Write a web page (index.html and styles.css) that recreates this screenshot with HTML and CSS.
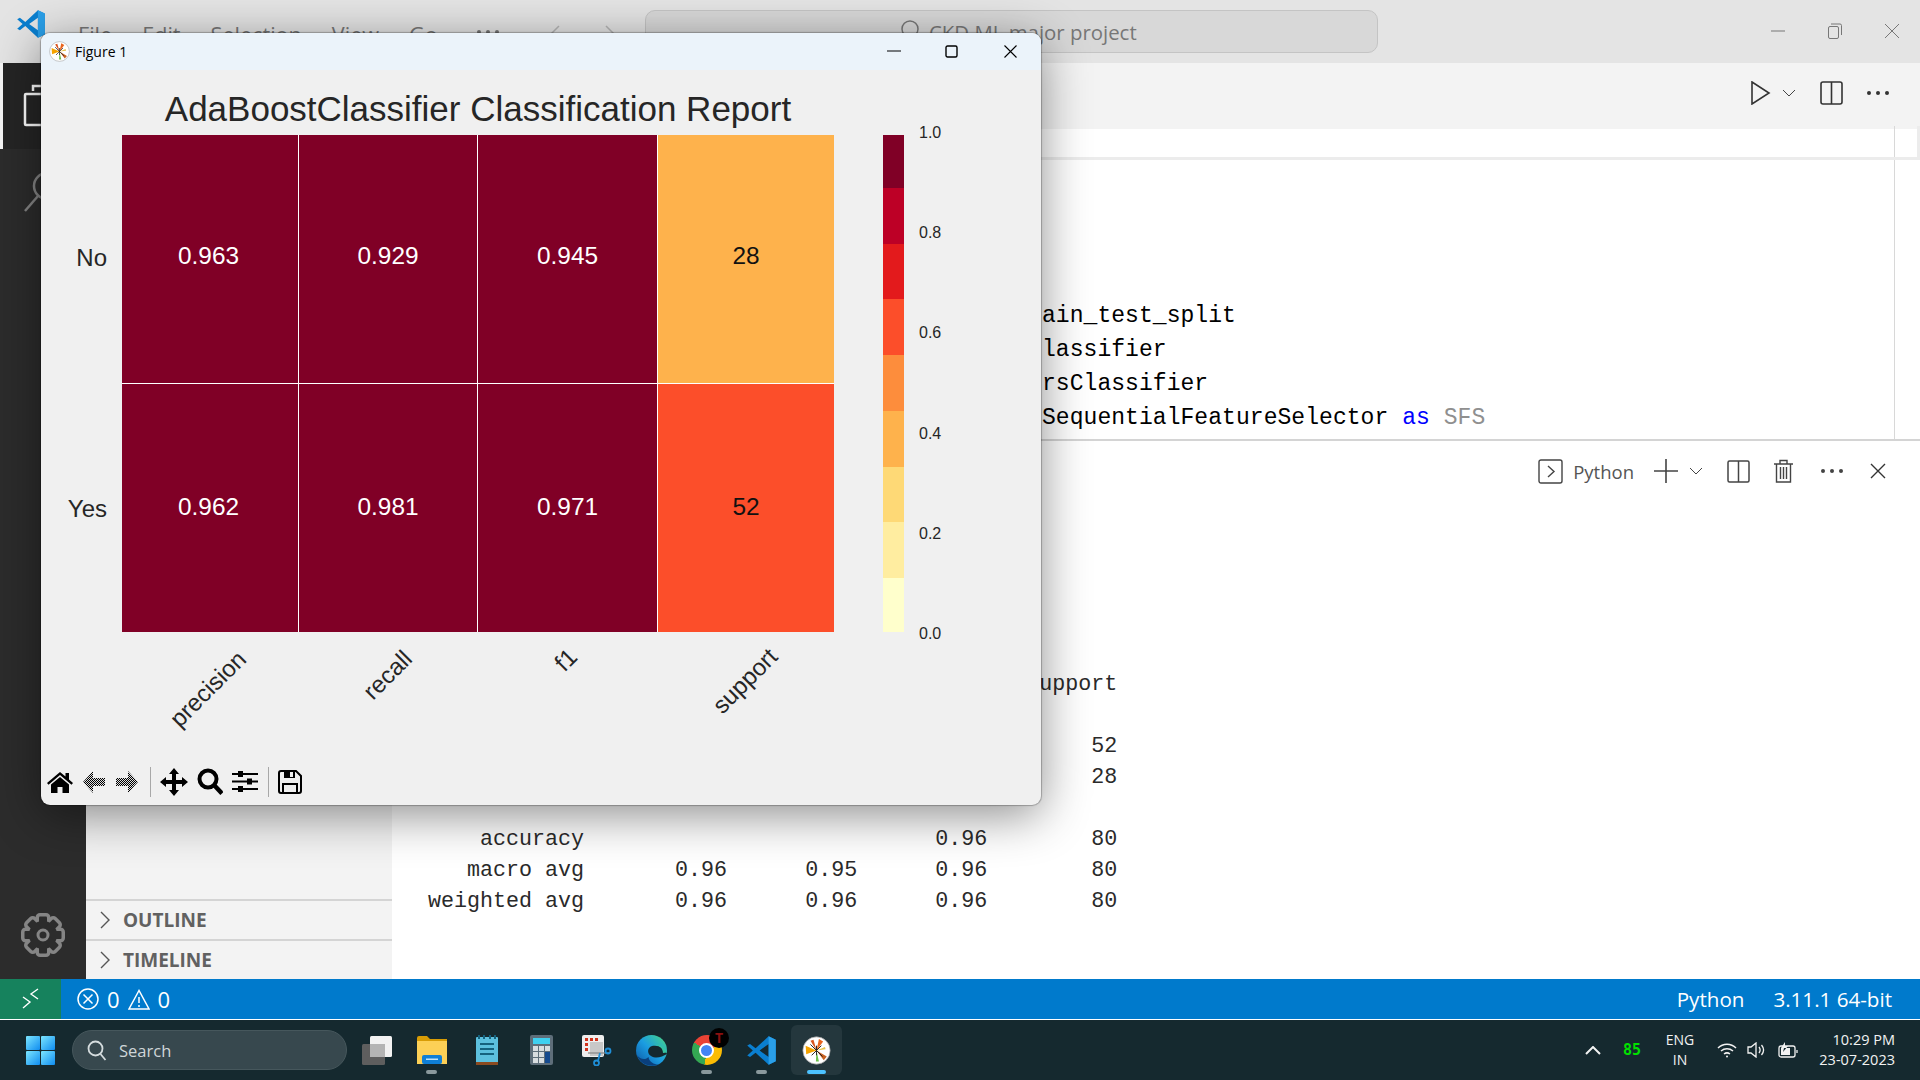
FILE: index.html
```html
<!DOCTYPE html>
<html lang="en">
<head>
    <meta charset="UTF-8">
    <meta name="viewport" content="width=device-width, initial-scale=1.0">
    <title>CKD ML major project</title>
    <link rel="stylesheet" href="styles.css">
</head>
<body>

<svg class="defs" width="0" height="0">
    <defs>
        <pattern id="dither" width="2" height="2" patternUnits="userSpaceOnUse">
            <rect width="1" height="1" fill="#000"/>
            <rect x="1" y="1" width="1" height="1" fill="#000"/>
            <rect x="1" width="1" height="1" fill="#e0e0e0"/>
            <rect y="1" width="1" height="1" fill="#e0e0e0"/>
        </pattern>
        <linearGradient id="edge-grad" x1="0" y1="1" x2="1" y2="0">
            <stop offset="0" stop-color="#0b53a0"/>
            <stop offset=".5" stop-color="#1b9de2"/>
            <stop offset=".8" stop-color="#35c1a8"/>
            <stop offset="1" stop-color="#6ade6a"/>
        </linearGradient>
        <linearGradient id="win-grad" x1="0" y1="0" x2="1" y2="1">
            <stop offset="0" stop-color="#7ce6ff"/>
            <stop offset="1" stop-color="#0f8cf0"/>
        </linearGradient>
        <symbol id="vscode" viewBox="0 0 100 100">
            <path fill="#0a7fd0" fill-rule="evenodd" d="M73 4L31 43 13 29 4 34 22 50 4 66 13 71 31 57 73 96 96 85V15ZM73 29L44 50 73 71Z"/>
            <path fill="#2a9fe8" d="M73 4L96 15V85L73 96Z"/>
        </symbol>
        <symbol id="mpl" viewBox="0 0 24 24">
            <circle cx="12" cy="12" r="11.3" fill="#fff" stroke="#999" stroke-width=".6"/>
            <path fill="#f5a300" d="M12 12 L3 8 L3.5 15 Z"/>
            <path fill="#e8641e" d="M12 12 L14 2.5 L17.5 4.5 Z"/>
            <path fill="#d9541e" d="M12 12 L7 4 L9.5 3 Z"/>
            <path fill="#c9611f" d="M12 12 L20.5 17 L18 20 Z"/>
            <path fill="#6cc04a" d="M12 12 L14 21 L11.5 21 Z"/>
            <path fill="#e6c34a" d="M12 12 L19 9 L19.5 11 Z"/>
            <path stroke="#222" stroke-width=".8" d="M7 7 L17 17 M16 8 L8 16 M12 8 V16"/>
        </symbol>
        <symbol id="dots" viewBox="0 0 22 4">
            <circle cx="2" cy="2" r="2"/>
            <circle cx="11" cy="2" r="2"/>
            <circle cx="20" cy="2" r="2"/>
        </symbol>
        <g id="gear-bars">
            <rect x="18" y="3.5" width="8" height="37" rx="1"/>
            <rect x="18" y="3.5" width="8" height="37" rx="1" transform="rotate(45 22 22)"/>
            <rect x="18" y="3.5" width="8" height="37" rx="1" transform="rotate(90 22 22)"/>
            <rect x="18" y="3.5" width="8" height="37" rx="1" transform="rotate(135 22 22)"/>
        </g>
    </defs>
</svg>

<div class="desktop">

    <!-- vs code window -->
    <header class="titlebar">
        <svg class="app-logo" width="30" height="30"><use href="#vscode"/></svg>
        <nav class="menu">
            <span>File</span>
            <span>Edit</span>
            <span>Selection</span>
            <span>View</span>
            <span>Go</span>
            <svg class="menu-more" width="22" height="4" fill="#777"><use href="#dots"/></svg>
        </nav>
        <div class="nav-arrows">
            <svg width="23" height="20" viewBox="0 0 23 20" fill="none" stroke="#b5b5b5" stroke-width="1.5"><path d="M22 10H2M10 2l-8 8 8 8"/></svg>
            <svg width="23" height="20" viewBox="0 0 23 20" fill="none" stroke="#b5b5b5" stroke-width="1.5"><path d="M1 10h20M13 2l8 8-8 8"/></svg>
        </div>
        <div class="command-center">
            <svg width="22" height="24" viewBox="0 0 22 24" fill="none" stroke="#777" stroke-width="1.5"><circle cx="11" cy="10" r="8"/><path d="M6 16l-4 6"/></svg>
            <span>CKD ML major project</span>
        </div>
        <div class="win-controls">
            <svg width="14" height="14" viewBox="0 0 14 14" fill="none" stroke="#777"><path d="M0 7h14"/></svg>
            <svg width="14" height="16" viewBox="0 0 14 16" fill="none" stroke="#777"><rect x=".5" y="3.5" width="10" height="12" rx="1.5"/><path d="M3 1h9a1.5 1.5 0 0 1 1.5 1.5V12"/></svg>
            <svg width="14" height="14" viewBox="0 0 14 14" fill="none" stroke="#777"><path d="M0 0l14 14M14 0L0 14"/></svg>
        </div>
    </header>

    <div class="workbench">
        <aside class="activity">
            <div class="activity-item is-active">
                <svg width="36" height="44" viewBox="0 0 36 44" fill="none" stroke="#fff" stroke-width="2.5"><path d="M10 7V2h16l8 8v24H18"/><rect x="2" y="10" width="22" height="31" rx="1"/></svg>
            </div>
            <div class="activity-item">
                <svg width="40" height="44" viewBox="0 0 40 44" fill="none" stroke="#858585" stroke-width="2.5"><circle cx="25" cy="16" r="13"/><path d="M16 26L3 41"/></svg>
            </div>
            <div class="activity-gear">
                <svg width="44" height="44" viewBox="0 0 44 44">
                    <circle cx="22" cy="22" r="14" fill="none" stroke="#858585" stroke-width="7"/>
                    <use href="#gear-bars" fill="none" stroke="#858585" stroke-width="7"/>
                    <circle cx="22" cy="22" r="14" fill="#2c2c2c"/>
                    <use href="#gear-bars" fill="#2c2c2c"/>
                    <circle cx="22" cy="22" r="5" fill="none" stroke="#858585" stroke-width="3"/>
                </svg>
            </div>
        </aside>

        <aside class="sidebar">
            <div class="sidebar-rest"></div>
            <div class="sidebar-section">
                <svg width="10" height="18" viewBox="0 0 10 18" fill="none" stroke="#555" stroke-width="1.4"><path d="M1 1l8 8-8 8"/></svg>
                <span>OUTLINE</span>
            </div>
            <div class="sidebar-section">
                <svg width="10" height="18" viewBox="0 0 10 18" fill="none" stroke="#555" stroke-width="1.4"><path d="M1 1l8 8-8 8"/></svg>
                <span>TIMELINE</span>
            </div>
        </aside>

        <main class="main">
            <div class="tabs">
                <svg width="20" height="24" viewBox="0 0 20 24" fill="none" stroke="#333" stroke-width="1.6"><path d="M1 1l17 11L1 23z"/></svg>
                <svg class="tabs-chevron" width="14" height="8" viewBox="0 0 14 8" fill="none" stroke="#444"><path d="M1 1l6 6 6-6"/></svg>
                <svg class="tabs-split" width="23" height="24" viewBox="0 0 23 24" fill="none" stroke="#333" stroke-width="1.6"><rect x="1" y="1" width="21" height="22" rx="2"/><path d="M11.500 1v22"/></svg>
                <svg class="tabs-dots" width="22" height="4" fill="#333"><use href="#dots"/></svg>
            </div>
            <div class="breadcrumb"><div class="breadcrumb-end"></div></div>
            <div class="editor">
                <pre class="code">ain_test_split
lassifier
rsClassifier
SequentialFeatureSelector <span class="kw">as</span> <span class="unused">SFS</span></pre>
                <div class="minimap"></div>
            </div>
            <section class="panel">
                <div class="panel-actions">
                    <svg width="25" height="25" viewBox="0 0 25 25" fill="none" stroke="#444" stroke-width="1.4"><rect x="1" y="1" width="23" height="23" rx="2"/><path d="M10 7l6 5.500-6 5.500"/></svg>
                    <span class="panel-shell">Python</span>
                    <svg class="panel-plus" width="24" height="24" viewBox="0 0 24 24" fill="none" stroke="#444" stroke-width="1.6"><path d="M0 12h24M12 0v24"/></svg>
                    <svg width="14" height="8" viewBox="0 0 14 8" fill="none" stroke="#444"><path d="M1 1l6 6 6-6"/></svg>
                    <svg class="panel-split" width="23" height="23" viewBox="0 0 23 23" fill="none" stroke="#444" stroke-width="1.5"><rect x="1" y="1" width="21" height="21" rx="1.5"/><path d="M11.500 1v21"/></svg>
                    <svg class="panel-trash" width="19" height="24" viewBox="0 0 19 24" fill="none" stroke="#444" stroke-width="1.4"><path d="M0 5h19M6 5V1.500h7V5M2.500 5v18h14V5M6.500 8v12M9.500 8v12M12.500 8v12"/></svg>
                    <svg class="panel-dots" width="22" height="4" fill="#444"><use href="#dots"/></svg>
                    <svg class="panel-close" width="16" height="16" viewBox="0 0 16 16" fill="none" stroke="#333" stroke-width="1.4"><path d="M1 1l14 14M15 1L1 15"/></svg>
                </div>
<pre class="terminal">                                               upport

                                                   52
                                                   28

    accuracy                           0.96        80
   macro avg       0.96      0.95      0.96        80
weighted avg       0.96      0.96      0.96        80</pre>
            </section>
        </main>
    </div>

    <footer class="statusbar">
        <div class="remote">
            <svg width="18" height="22" viewBox="0 0 18 22" fill="none" stroke="#fff" stroke-width="1.4"><path d="M1 9l7 5-7 6M16 1L9 6l7 5"/></svg>
        </div>
        <div class="problems">
            <svg width="22" height="22" viewBox="0 0 22 22" fill="none" stroke="#fff" stroke-width="1.5"><circle cx="11" cy="11" r="10"/><path d="M6.500 6.500l9 9M15.500 6.500l-9 9"/></svg>
            <span>0</span>
            <svg width="22" height="21" viewBox="0 0 22 21" fill="none" stroke="#fff" stroke-width="1.5"><path d="M11 1.500L1 20h20zM11 8v6M11 16v2"/></svg>
            <span>0</span>
        </div>
        <div class="status-right">
            <span>Python</span>
            <span>3.11.1 64-bit</span>
        </div>
    </footer>

    <!-- windows taskbar -->
    <div class="taskbar">
        <svg class="start" width="29" height="29" viewBox="0 0 29 29">
            <rect width="14" height="14" rx="1" fill="url(#win-grad)"/>
            <rect x="15" width="14" height="14" rx="1" fill="url(#win-grad)"/>
            <rect y="15" width="14" height="14" rx="1" fill="url(#win-grad)"/>
            <rect x="15" y="15" width="14" height="14" rx="1" fill="url(#win-grad)"/>
        </svg>
        <div class="task-search">
            <svg width="20" height="21" viewBox="0 0 20 21" fill="none" stroke="#d5dcde" stroke-width="1.8"><circle cx="8.500" cy="8.500" r="7"/><path d="M13.500 14l5 6"/></svg>
            <span>Search</span>
        </div>
        <div class="app">
            <svg width="30" height="30" viewBox="0 0 30 30"><rect y="9" width="23" height="21" rx="1.500" fill="#5e5e5e"/><rect x="8" y="1" width="22" height="21" rx="1.500" fill="#f2f2f2"/><rect x="8" y="9" width="15" height="13" fill="#b4b4b4"/></svg>
        </div>
        <div class="app has-dot">
            <svg width="30" height="28" viewBox="0 0 30 28"><path fill="#d89c05" d="M0 2a2 2 0 0 1 2-2h8l3 3h17v6H0z"/><path fill="#fcd056" d="M0 5h30v23H0z"/><rect x="5" y="19" width="20" height="9" rx="2" fill="#0f7fd6"/><rect x="9" y="22.500" width="12" height="1.500" fill="#bfe3fa"/></svg>
        </div>
        <div class="app">
            <svg width="22" height="30" viewBox="0 0 22 30"><rect y="2" width="22" height="26" rx="1" fill="#5cc0de"/><rect y="27" width="22" height="3" fill="#8a4a20"/><path stroke="#15627e" stroke-width="2" d="M4 9h14M4 14h14M4 19h14M3 0v4M8 0v4M14 0v4M19 0v4"/></svg>
        </div>
        <div class="app">
            <svg width="23" height="30" viewBox="0 0 23 30"><rect width="23" height="30" rx="2" fill="#5e6e7a"/><rect x="3" y="3" width="17" height="6" fill="#3fd0f0"/><path fill="#d8dde0" d="M3 11h5v5H3zM9 11h5v5H9zM15 11h5v5h-5zM3 17h5v5H3zM9 17h5v5H9zM3 23h5v5H3zM9 23h5v5H9z"/><rect x="15" y="17" width="5" height="11" fill="#154a8e"/></svg>
        </div>
        <div class="app">
            <svg width="30" height="31" viewBox="0 0 30 31">
                <rect width="22" height="22" rx="2" fill="#eee"/>
                <path fill="#d0321c" d="M3 3h3v3H3zM8 3h3v3H8zM13 3h3v3h-3zM3 8h3v3H3zM3 13h3v3H3z"/>
                <rect x="8" y="7" width="13" height="14" fill="#c8c8c8"/>
                <path fill="none" stroke="#8a8a8a" stroke-width="1.300" d="M6 18h22"/>
                <path fill="none" stroke="#1f8fd8" stroke-width="1.800" d="M18 18l-2 8"/>
                <circle cx="26" cy="16" r="2.500" fill="none" stroke="#1f8fd8" stroke-width="1.800"/>
                <circle cx="14.500" cy="28" r="2.500" fill="none" stroke="#1f8fd8" stroke-width="1.800"/>
            </svg>
        </div>
        <div class="app">
            <svg width="31" height="31" viewBox="0 0 31 31">
                <circle cx="15.500" cy="15.500" r="15.500" fill="url(#edge-grad)"/>
                <path fill="#0a3f7c" d="M1 20C4 29 14 33 23 29.500 19 30 13 27 12.500 22 10 25 4 25 1 20Z"/>
                <path fill="#14282e" d="M31 19C29 13 22 9.500 16 11 11 12.500 11 19 15 21 20 24 26 22 31 19Z"/>
                <path fill="#37c4a0" d="M31 17.500C29 12 22 8 16 10 22 9 27 13 27 18Z"/>
            </svg>
        </div>
        <div class="app has-dot">
            <div class="chrome"><div class="chrome-eye"></div></div>
            <span class="chrome-badge">T</span>
        </div>
        <div class="app has-dot">
            <svg width="31" height="31"><use href="#vscode"/></svg>
        </div>
        <div class="app is-open">
            <svg width="29" height="29"><use href="#mpl"/></svg>
        </div>

        <div class="tray">
            <svg width="16" height="9" viewBox="0 0 16 9" fill="none" stroke="#f2f2f2" stroke-width="2"><path d="M1 8l7-7 7 7"/></svg>
            <span class="tray-temp">85</span>
            <span class="tray-lang">ENG<br>IN</span>
            <svg width="20" height="15" viewBox="0 0 20 15" fill="none" stroke="#f2f2f2" stroke-width="1.500"><path d="M1 5c5-5 13-5 18 0M4 8c3.500-3 8.500-3 12 0M7 11c2-1.500 4-1.500 6 0"/><circle cx="10" cy="13.500" r="1" fill="#f2f2f2" stroke="none"/></svg>
            <svg class="tray-vol" width="20" height="16" viewBox="0 0 20 16" fill="none" stroke="#f2f2f2" stroke-width="1.300"><path d="M1 5v6h3l5 4V1L4 5zM12 5c1.500 2 1.500 4 0 6M14.500 3c2.500 3 2.500 7 0 10"/></svg>
            <svg class="tray-bat" width="20" height="17" viewBox="0 0 20 17" fill="none" stroke="#f2f2f2" stroke-width="1.300"><rect x="1" y="4" width="16" height="11" rx="2"/><path d="M19 8v3"/><path fill="#f2f2f2" stroke="none" d="M3 6h9v7H3zM7 0L3 6h3l-1 4 5-6H7z"/></svg>
            <div class="tray-clock">
                <span>10:29 PM</span>
                <span>23-07-2023</span>
            </div>
        </div>
    </div>

    <!-- matplotlib figure window, floats over vs code -->
    <div class="figure">
        <div class="figure-titlebar">
            <svg width="21" height="21"><use href="#mpl"/></svg>
            <span class="figure-name">Figure 1</span>
            <div class="figure-controls">
                <svg width="14" height="14" viewBox="0 0 14 14" fill="none" stroke="#000" stroke-width="1.200"><path d="M0 6h14"/></svg>
                <svg width="13" height="13" viewBox="0 0 13 13" fill="none" stroke="#000" stroke-width="1.400"><rect x="1" y="1" width="11" height="11" rx="1.500"/></svg>
                <svg width="13" height="13" viewBox="0 0 13 13" fill="none" stroke="#000" stroke-width="1.100"><path d="M.5.500l12 12M12.500.500l-12 12"/></svg>
            </div>
        </div>

        <h1 class="plot-title">AdaBoostClassifier Classification Report</h1>

        <div class="plot-row">
            <div class="y-ticks">
                <span>No</span>
                <span>Yes</span>
            </div>
            <div class="heatmap">
                <div class="cell c-dark">0.963</div>
                <div class="cell c-dark">0.929</div>
                <div class="cell c-dark">0.945</div>
                <div class="cell c-orange">28</div>
                <div class="cell c-dark">0.962</div>
                <div class="cell c-dark">0.981</div>
                <div class="cell c-dark">0.971</div>
                <div class="cell c-red">52</div>
            </div>
            <div class="colorbar">
                <div class="seg-1"></div>
                <div class="seg-2"></div>
                <div class="seg-3"></div>
                <div class="seg-4"></div>
                <div class="seg-5"></div>
                <div class="seg-6"></div>
                <div class="seg-7"></div>
                <div class="seg-8"></div>
                <div class="seg-9"></div>
            </div>
            <div class="cbar-ticks">
                <span>1.0</span>
                <span>0.8</span>
                <span>0.6</span>
                <span>0.4</span>
                <span>0.2</span>
                <span>0.0</span>
            </div>
        </div>

        <div class="x-ticks">
            <span class="tick-precision">precision</span>
            <span class="tick-recall">recall</span>
            <span class="tick-f1">f1</span>
            <span class="tick-support">support</span>
        </div>

        <div class="figure-toolbar">
            <svg width="26" height="22" viewBox="0 0 26 22"><path d="M13 1L0 12l1.500 1.800L13 4l11.500 9.800L26 12l-4-3.400V2h-3.500v3.600z"/><path d="M13 6L4 13.500V22h6.500v-6h5v6H22v-8.500z"/></svg>
            <svg class="tb-back" width="24" height="24" viewBox="0 0 24 24"><path fill="url(#dither)" d="M11 1L1 12l10 11v-7h12V8H11z"/></svg>
            <svg class="tb-forward" width="24" height="24" viewBox="0 0 24 24"><path fill="url(#dither)" d="M13 1l10 11-10 11v-7H1V8h12z"/></svg>
            <div class="tb-sep"></div>
            <svg width="28" height="28" viewBox="0 0 28 28"><path d="M14 0l5 6h-3v6h6V9l6 5-6 5v-3h-6v6h3l-5 6-5-6h3v-6H6v3l-6-5 6-5v3h6V6H9z"/></svg>
            <svg class="tb-zoom" width="26" height="27" viewBox="0 0 26 27" fill="none" stroke="#000"><circle cx="11" cy="11" r="8.500" stroke-width="4"/><path d="M17 17l8 8.500" stroke-width="4.500"/></svg>
            <svg class="tb-sliders" width="26" height="23" viewBox="0 0 26 23"><path stroke="#000" stroke-width="2" d="M0 4h26M0 11.500h26M0 19h26"/><path d="M6 1h5v6H6zM15 8.500h5v6h-5zM6 16h5v6H6z"/></svg>
            <div class="tb-sep"></div>
            <svg width="24" height="24" viewBox="0 0 24 24" fill="none" stroke="#000" stroke-width="2"><path d="M1 3a2 2 0 0 1 2-2h15l5 5v15a2 2 0 0 1-2 2H3a2 2 0 0 1-2-2zM5 23v-9h14v9"/><path fill="#000" stroke="none" d="M6 1h11v7H6z"/><path fill="#f0f0f0" stroke="none" d="M12 2h3v5h-3z"/></svg>
        </div>
    </div>

</div>

</body>
</html>
```

FILE: styles.css
```css
* {
    box-sizing: border-box;
}

body {
    margin: 0;
    padding: 0;
    overflow: hidden;
    font-family: 'Open Sans', sans-serif;
    background-color: #15292f;
}

svg {
    display: block;
    flex: none;
}

.defs {
    position: absolute;
}

.desktop {
    position: relative;
    width: 1920px;
    height: 1080px;
    display: flex;
    flex-direction: column;
    overflow: hidden;
}

/* title bar */
.titlebar {
    height: 63px;
    background-color: #e4e4e4;
    display: flex;
    align-items: center;
    color: #777;
    flex: none;
}

.app-logo {
    margin: 0 32px 16px 16px;
}

.menu {
    display: flex;
    gap: 30px;
    font-size: 21.6px;
    width: 471px;
    margin-top: 5px;
}

.menu-more {
    margin: 10px 0 0 9px;
}

.nav-arrows {
    display: flex;
    gap: 21px;
    width: 96px;
    margin-top: 4px;
}

.command-center {
    width: 733px;
    height: 43px;
    margin-bottom: 1px;
    background-color: #d8d8d8;
    border: 1px solid #c4c4c4;
    border-radius: 10px;
    display: flex;
    align-items: center;
    gap: 8px;
    padding-left: 253px;
    font-size: 20.4px;
}

.command-center span {
    margin-top: 2px;
}

.win-controls {
    margin-left: auto;
    display: flex;
    align-items: center;
    gap: 43px;
    padding-right: 21px;
    margin-bottom: 2px;
}

/* workbench */
.workbench {
    flex: 1;
    display: flex;
    min-height: 0;
}

.activity {
    width: 86px;
    background-color: #2c2c2c;
    display: flex;
    flex-direction: column;
    flex: none;
}

.activity-item {
    height: 86px;
    padding: 21px 0 0 22px;
}

.activity-item.is-active {
    background-color: #252525;
    border-left: 3px solid #f5f5f5;
    padding-left: 20px;
}

.activity-gear {
    margin-top: auto;
    padding: 0 0 22px 21px;
}

.sidebar {
    width: 306px;
    background-color: #f3f3f3;
    display: flex;
    flex-direction: column;
    flex: none;
}

.sidebar-rest {
    flex: 1;
}

.sidebar-section {
    height: 40px;
    border-top: 2px solid #d4d4d4;
    display: flex;
    align-items: center;
    gap: 13px;
    padding-left: 14px;
    font-size: 19px;
    font-weight: 700;
    color: #616161;
}

.main {
    flex: 1;
    min-width: 0;
    display: flex;
    flex-direction: column;
    background-color: #fff;
}

.tabs {
    height: 66px;
    background-color: #f3f3f3;
    display: flex;
    align-items: center;
    justify-content: flex-end;
    padding: 0 31px 6px 0;
    flex: none;
    color: #333;
}

.tabs-chevron {
    margin-left: 11px;
}

.tabs-split {
    margin-left: 24px;
}

.tabs-dots {
    margin-left: 24px;
}

.breadcrumb {
    height: 31px;
    border-bottom: 3px solid #ececec;
    display: flex;
    justify-content: flex-end;
    flex: none;
}

.breadcrumb-end {
    width: 26px;
    border-left: 1px solid #d8d8d8;
    border-right: 3px solid #ececec;
    margin-top: -3px;
}

.editor {
    height: 279px;
    display: flex;
    justify-content: space-between;
    flex: none;
}

.code {
    margin: 139px 0 0 650px;
    font-family: 'Liberation Mono', monospace;
    font-size: 23px;
    letter-spacing: .05px;
    line-height: 34px;
    color: #000;
}

.kw {
    color: #0000ff;
}

.unused {
    color: #8f8f8f;
}

.minimap {
    width: 26px;
    border-left: 1px solid #d8d8d8;
}

.panel {
    flex: 1;
    border-top: 2px solid #d4d4d4;
}

.panel-actions {
    height: 60px;
    display: flex;
    align-items: center;
    justify-content: flex-end;
    padding: 0 34px 0 0;
    color: #555;
}

.panel-shell {
    font-size: 18.5px;
    margin-left: 10px;
}

.panel-plus {
    margin-left: 20px;
    margin-right: 11px;
}

.panel-split {
    margin-left: 23.5px;
}

.panel-trash {
    margin-left: 24.5px;
}

.panel-dots {
    margin-left: 28px;
}

.panel-close {
    margin-left: 27px;
}

.terminal {
    margin: 168px 0 0 36px;
    font-family: 'Liberation Mono', monospace;
    font-size: 21.68px;
    line-height: 31px;
    color: #2a2a2a;
}

/* status bar */
.statusbar {
    height: 40px;
    background-color: #007acc;
    display: flex;
    align-items: center;
    color: #fff;
    flex: none;
}

.remote {
    width: 61px;
    height: 100%;
    background-color: #16825d;
    display: flex;
    align-items: center;
    justify-content: center;
}

.problems {
    display: flex;
    align-items: center;
    gap: 8px;
    margin-left: 16px;
    font-size: 22px;
}

.status-right {
    margin-left: auto;
    display: flex;
    gap: 29px;
    padding-right: 28px;
    font-size: 20.6px;
}

/* taskbar */
.taskbar {
    height: 61px;
    border-top: 1px solid #fff;
    background-color: #15292f;
    display: flex;
    align-items: center;
    padding-left: 26px;
    color: #f2f2f2;
    flex: none;
}

.task-search {
    width: 275px;
    height: 40px;
    margin-left: 17px;
    margin-right: 2px;
    border-radius: 20px;
    background-color: #37484e;
    border: 1px solid #46575c;
    display: flex;
    align-items: center;
    gap: 12px;
    padding-left: 14px;
    font-size: 16.5px;
    color: #cfd6d8;
}

.app {
    width: 55px;
    height: 50px;
    position: relative;
    display: flex;
    align-items: center;
    justify-content: center;
    border-radius: 6px;
}

.app.has-dot::after {
    content: "";
    position: absolute;
    left: 22px;
    bottom: 1px;
    width: 11px;
    height: 4px;
    border-radius: 2px;
    background-color: #8a999d;
}

.app.is-open {
    width: 51px;
    margin-left: 2px;
    background-color: #24373d;
}

.app.is-open::after {
    content: "";
    position: absolute;
    left: 16px;
    bottom: 1px;
    width: 19px;
    height: 4px;
    border-radius: 2px;
    background-color: #4cc2ff;
}

.chrome {
    width: 30px;
    height: 30px;
    border-radius: 50%;
    background: conic-gradient(#ea4335 0deg 70deg, #fbbc04 70deg 190deg, #34a853 190deg 300deg, #ea4335 300deg);
    display: flex;
    align-items: center;
    justify-content: center;
}

.chrome-eye {
    width: 15px;
    height: 15px;
    border-radius: 50%;
    background-color: #4285f4;
    border: 2px solid #fff;
}

.chrome-badge {
    position: absolute;
    left: 30px;
    top: 3px;
    width: 20px;
    height: 20px;
    border-radius: 50%;
    background-color: #000;
    color: #8a1010;
    font-size: 14px;
    font-weight: 700;
    line-height: 20px;
    text-align: center;
}

.tray {
    margin-left: auto;
    display: flex;
    align-items: center;
    padding-right: 25px;
}

.tray-temp {
    margin-left: 22px;
    width: 24px;
    font-family: 'DejaVu Sans Mono', monospace;
    font-size: 15px;
    font-weight: 700;
    color: #00e000;
}

.tray-lang {
    margin-left: 12px;
    width: 42px;
    font-size: 14px;
    line-height: 20px;
    text-align: center;
    margin-right: 16px;
}

.tray-vol {
    margin-left: 10px;
}

.tray-bat {
    margin-left: 11px;
}

.tray-clock {
    width: 97px;
    display: flex;
    flex-direction: column;
    align-items: flex-end;
    font-size: 14.5px;
    line-height: 20px;
}

/* figure window */
.figure {
    position: absolute;
    left: 41px;
    top: 33px;
    width: 1000px;
    height: 772px;
    background-color: #f0f0f0;
    border-radius: 9px;
    box-shadow: 0 0 1px 1px rgba(0, 0, 0, .25), 0 10px 48px rgba(0, 0, 0, .45);
    overflow: hidden;
    font-family: 'Liberation Sans', sans-serif;
    color: #262626;
}

.figure-titlebar {
    height: 37px;
    background-color: #ebf3fa;
    display: flex;
    align-items: center;
    padding-left: 8px;
    font-family: 'Open Sans', sans-serif;
    font-size: 14px;
    color: #000;
}

.figure-name {
    margin-left: 5px;
}

.figure-controls {
    margin-left: auto;
    display: flex;
    align-items: center;
    gap: 44px;
    padding-right: 24px;
}

.figure-controls svg:nth-child(2) {
    margin-right: 2px;
}

.plot-title {
    margin: 0 0 0 81px;
    width: 712px;
    height: 65px;
    padding-top: 19px;
    font-size: 35px;
    font-weight: 400;
    line-height: 40px;
    text-align: center;
    white-space: nowrap;
}

.plot-row {
    height: 497px;
    display: flex;
}

.y-ticks {
    width: 81px;
    padding-right: 15px;
    display: grid;
    grid-template-rows: 1fr 1fr;
    align-items: center;
    justify-items: end;
    font-size: 24px;
}

.y-ticks span:first-child {
    padding-bottom: 2px;
}

.y-ticks span:last-child {
    padding-top: 2px;
}

.heatmap {
    width: 712px;
    display: grid;
    grid-template-columns: 176px 178px 179px 176px;
    grid-template-rows: 1fr 1fr;
    gap: 1px;
    background-color: #fff;
}

.cell {
    display: flex;
    align-items: center;
    justify-content: center;
    font-size: 24.4px;
    padding-bottom: 3px;
}

.cell:nth-child(-n+4) {
    padding-bottom: 6px;
}

.cell:nth-child(4n+1) {
    padding-right: 3px;
}

.c-dark {
    background-color: #800026;
    color: #fff;
}

.c-orange {
    background-color: #feb24c;
    color: #111;
}

.c-red {
    background-color: #fc4e2a;
    color: #111;
}

.colorbar {
    width: 21px;
    margin-left: 49px;
    display: flex;
    flex-direction: column;
}

.colorbar div {
    flex: 56;
}

.colorbar .seg-1 {
    flex: 53;
}

.colorbar .seg-9 {
    flex: 54;
}

.seg-1 { background-color: #800026; }
.seg-2 { background-color: #bd0026; }
.seg-3 { background-color: #e31a1c; }
.seg-4 { background-color: #fc4e2a; }
.seg-5 { background-color: #fd8d3c; }
.seg-6 { background-color: #feb24c; }
.seg-7 { background-color: #fed976; }
.seg-8 { background-color: #ffeda0; }
.seg-9 { background-color: #ffffcc; }

.cbar-ticks {
    margin: -12px 0 -12px 15px;
    display: flex;
    flex-direction: column;
    justify-content: space-between;
    font-size: 16px;
    line-height: 20px;
}

.x-ticks {
    height: 133px;
    margin-left: 81px;
    width: 712px;
    display: grid;
    grid-template-columns: 176px 178px 179px 176px;
    column-gap: 1px;
    align-items: start;
    justify-items: center;
    font-size: 24px;
    line-height: 24px;
}

.x-ticks span {
    transform: rotate(-45deg);
}

.tick-precision { margin: 45px 4px 0 0; }
.tick-recall { margin-top: 31px; }
.tick-f1 { margin: 16px 2px 0 0; }
.tick-support { margin: 37px 2px 0 0; }

.figure-toolbar {
    height: 40px;
    display: flex;
    align-items: center;
    padding: 0 0 7px 6px;
}

.tb-back {
    margin-left: 9px;
}

.tb-forward {
    margin-left: 9px;
}

.tb-sep {
    width: 1px;
    height: 30px;
    background-color: #a8a8a8;
    margin: 0 9px 0 11px;
}

.tb-sep:nth-last-child(2) {
    margin: 0 9px 0 10px;
}

.tb-zoom {
    margin-left: 9px;
}

.tb-sliders {
    margin-left: 9px;
}
```
